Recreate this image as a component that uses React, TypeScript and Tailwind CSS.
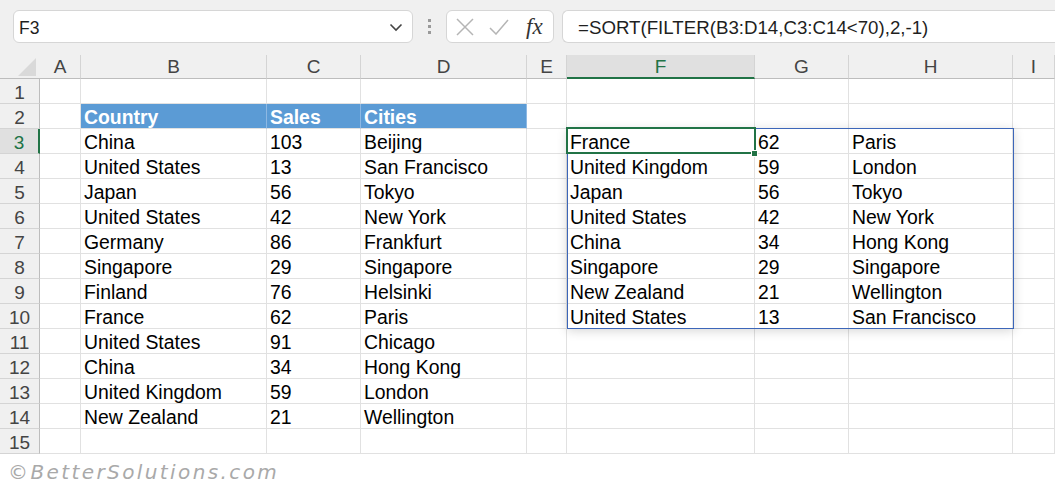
import React from "react";

const COLS = ["A", "B", "C", "D", "E", "F", "G", "H", "I"];

const left: [string, string, string][] = [
  ["China", "103", "Beijing"],
  ["United States", "13", "San Francisco"],
  ["Japan", "56", "Tokyo"],
  ["United States", "42", "New York"],
  ["Germany", "86", "Frankfurt"],
  ["Singapore", "29", "Singapore"],
  ["Finland", "76", "Helsinki"],
  ["France", "62", "Paris"],
  ["United States", "91", "Chicago"],
  ["China", "34", "Hong Kong"],
  ["United Kingdom", "59", "London"],
  ["New Zealand", "21", "Wellington"],
];

const right: [string, string, string][] = [
  ["France", "62", "Paris"],
  ["United Kingdom", "59", "London"],
  ["Japan", "56", "Tokyo"],
  ["United States", "42", "New York"],
  ["China", "34", "Hong Kong"],
  ["Singapore", "29", "Singapore"],
  ["New Zealand", "21", "Wellington"],
  ["United States", "13", "San Francisco"],
];

function cellValue(row: number, col: number): string {
  if (row === 2) {
    if (col === 1) return "Country";
    if (col === 2) return "Sales";
    if (col === 3) return "Cities";
  }
  if (row >= 3 && row <= 14 && col >= 1 && col <= 3) return left[row - 3][col - 1];
  if (row >= 3 && row <= 10 && col >= 5 && col <= 7) return right[row - 3][col - 5];
  return "";
}

export default function App() {
  const rows = Array.from({ length: 15 }, (_, i) => i + 1);
  return (
    <div
      className="w-[1055px] h-[489px] bg-white overflow-hidden relative"
      style={{ fontFamily: '"Liberation Sans", Arial, sans-serif' }}
    >
      {/* Formula bar */}
      <div className="h-[55px] bg-[#f0f0f0] flex items-start pt-[10px]">
        <div className="ml-[13px] w-[400px] h-[33px] bg-white border border-[#d6d6d6] rounded-[6px] flex items-center pl-[5px] pr-[8px] pt-[3px]">
          <span className="text-[17.5px] text-[#1f1f1f] flex-1">F3</span>
          <svg width="14" height="9" viewBox="0 0 14 9" className="mr-[1px] -mt-[2px]">
            <path d="M1.5 1.5 L7 7 L12.5 1.5" fill="none" stroke="#444" strokeWidth="1.6" />
          </svg>
        </div>
        <div className="w-[33px] h-[33px] flex flex-col items-center justify-center gap-[3px]">
          <div className="w-[3px] h-[3px] bg-[#9a9a9a]" />
          <div className="w-[3px] h-[3px] bg-[#9a9a9a]" />
          <div className="w-[3px] h-[3px] bg-[#9a9a9a]" />
        </div>
        <div className="w-[108px] h-[33px] bg-white border border-[#d6d6d6] rounded-[6px] flex items-center pl-[9px]">
          <svg width="18" height="18" viewBox="0 0 18 18">
            <path d="M1 1 L17 17 M17 1 L1 17" stroke="#b5b5b5" strokeWidth="1.5" fill="none" />
          </svg>
          <svg width="20" height="16" viewBox="0 0 20 16" className="ml-[15px]">
            <path d="M1 9 L7 15 L19 1" stroke="#b5b5b5" strokeWidth="1.5" fill="none" />
          </svg>
          <span
            className="ml-[17px] text-[23px] italic text-[#333] leading-none"
            style={{ fontFamily: '"Liberation Serif", "Times New Roman", serif' }}
          >
            fx
          </span>
        </div>
        <div className="ml-[8px] flex-1 h-[33px] bg-white border border-[#d6d6d6] border-r-0 rounded-l-[6px] flex items-center pl-[15px] pt-[3px]">
          <span className="text-[18.7px] text-[#1f1f1f] whitespace-nowrap">=SORT(FILTER(B3:D14,C3:C14&lt;70),2,-1)</span>
        </div>
      </div>

      {/* Grid */}
      <div className="relative">
        <div className="grid grid-cols-[40px_41px_186px_94px_166px_40px_188px_94px_164px_42px]">
          <div className="h-[24px] bg-[#f0f0f0] border-b border-[#bdbdbd] relative">
            <svg width="18" height="18" viewBox="0 0 18 18" className="absolute right-[4px] bottom-[2px]">
              <path d="M18 0 L18 18 L0 18 Z" fill="#d9d9d9" />
            </svg>
          </div>
          {COLS.map((c) => {
            const sel = c === "F";
            return (
              <div
                key={c}
                className={
                  sel
                    ? "h-[24px] bg-[#e0e0e0] border-b-2 border-b-[#217346] border-r border-r-[#d4d4d4] flex items-center justify-center pt-[2px] text-[19px] text-[#217346]"
                    : "h-[24px] bg-[#f0f0f0] border-b border-b-[#bdbdbd] border-r border-r-[#d4d4d4] flex items-center justify-center pt-[2px] text-[19px] text-[#444]"
                }
              >
                {c}
              </div>
            );
          })}

          {rows.map((r) => (
            <React.Fragment key={r}>
              <div
                className={
                  r === 3
                    ? "h-[25px] bg-[#e0e0e0] border-r-2 border-r-[#217346] border-b border-b-[#d4d4d4] flex items-center justify-center pt-[4px] text-[19px] text-[#217346]"
                    : "h-[25px] bg-[#f0f0f0] border-r border-r-[#bdbdbd] border-b border-b-[#d4d4d4] flex items-center justify-center pt-[4px] text-[19px] text-[#444]"
                }
              >
                {r}
              </div>
              {COLS.map((c, ci) => {
                const v = cellValue(r, ci);
                const head = r === 2 && ci >= 1 && ci <= 3;
                return (
                  <div
                    key={c}
                    className={
                      head
                        ? "h-[25px] bg-[#5b9bd5] border-r border-r-[#8db8e3] border-b border-b-[#e1e1e1] pl-[3px] pt-[4px] flex items-center text-[19.4px] font-bold text-white whitespace-nowrap overflow-visible"
                        : "h-[25px] bg-white border-r border-r-[#e1e1e1] border-b border-b-[#e1e1e1] pl-[3px] pt-[4px] flex items-center text-[19.4px] text-black whitespace-nowrap overflow-visible"
                    }
                  >
                    {v}
                  </div>
                );
              })}
            </React.Fragment>
          ))}
        </div>

        <div className="absolute left-[567px] top-[73px] w-[447px] h-[201px] border border-[#3c66b9] shadow-[0_2px_10px_rgba(0,0,0,0.16)] pointer-events-none" />
        <div className="absolute left-[566px] top-[72px] w-[190px] h-[27px] border-2 border-[#217346] pointer-events-none" />
        <div className="absolute left-[751px] top-[95px] w-[7px] h-[7px] bg-[#217346] border border-white pointer-events-none" />
      </div>

      {/* Watermark */}
      <div
        className="absolute left-[8px] top-[457px] text-[20px] italic text-[#a9a9a9] tracking-[2.4px] whitespace-nowrap"
        style={{ fontFamily: '"DejaVu Sans", sans-serif' }}
      >
        ©BetterSolutions.com
      </div>
    </div>
  );
}
